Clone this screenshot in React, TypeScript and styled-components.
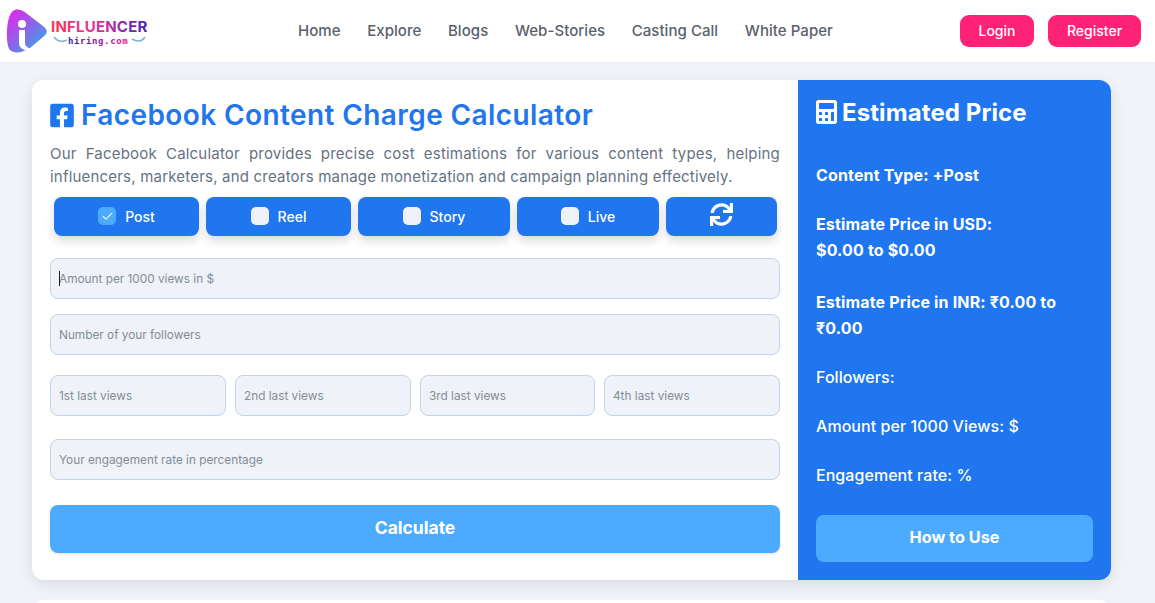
import styled, { createGlobalStyle } from 'styled-components'
import { FaCalculator, FaFacebookSquare, FaSync } from 'react-icons/fa'
import { Check } from 'lucide-react'

// Global Styles

const GlobalStyle = createGlobalStyle`
  html, body {
    margin: 0;
    height: 603px;
    overflow: hidden;
    background: #f0f3f7;
    font-family: Inter, "Liberation Sans", sans-serif;
  }
  * {
    box-sizing: border-box;
  }
`

// Header Styles

const Header = styled.header`
  height: 62px;
  background: #fff;
  display: flex;
  align-items: center;
  box-shadow: 0 1px 4px rgba(0, 0, 0, 0.04);
`

const LogoWrapper = styled.div`
  width: 290px;
  padding-left: 5px;
  display: flex;
  align-items: center;
`

const Nav = styled.nav`
  display: flex;
  gap: 26.6px;
  flex: 1;
  margin: -1px 0 0 8px;
`

const NavLink = styled.a`
  color: #5a616b;
  font-size: 15px;
  font-weight: 500;
  letter-spacing: 0.05px;
`

const AuthGroup = styled.div`
  display: flex;
  gap: 14px;
  padding-right: 14px;
`

const AuthButton = styled.button<{ wide?: boolean }>`
  width: ${props => (props.wide ? '93px' : '74px')};
  height: 32px;
  padding: 0 0 2px;
  border: none;
  border-radius: 9px;
  background: #ff2277;
  color: #fff;
  font: 500 14px Inter, sans-serif;
`

// Calculator Styles

const Card = styled.main`
  display: grid;
  grid-template-columns: 766px 313px;
  width: 1079px;
  height: 500px;
  margin: 18px 0 0 32px;
  border-radius: 12px;
  background: #fff;
  box-shadow: 0 4px 14px rgba(0, 0, 0, 0.1);
`

const FormPanel = styled.section`
  padding: 19px 18px 0;
`

const Title = styled.h1`
  display: flex;
  align-items: center;
  gap: 7px;
  margin: 0;
  height: 32px;
  color: #1f76ee;
  font-size: 28px;
  font-weight: 600;
  letter-spacing: 0.4px;
  white-space: nowrap;
  svg {
    width: 24px;
    height: 27px;
  }
`

const Intro = styled.p`
  margin: 11px 0 0;
  color: #66727f;
  font-size: 15px;
  line-height: 23px;
  letter-spacing: 0.2px;
  text-align: justify;
`

const TypeRow = styled.div`
  display: grid;
  grid-template-columns: 145px 145px 152px 142px 111px;
  gap: 7px;
  margin: 9px 4px 0;
`

const TypeButton = styled.label`
  display: flex;
  align-items: center;
  justify-content: center;
  gap: 9px;
  height: 39px;
  padding-bottom: 1px;
  border-radius: 8px;
  background: #1f76ee;
  color: #fff;
  font-size: 14px;
  font-weight: 500;
  box-shadow: 0 5px 10px rgba(0, 0, 0, 0.14);
`

const RefreshIcon = styled(FaSync)`
  width: 23px;
  height: 23px;
  margin-bottom: 4px;
`

const CheckBox = styled.span<{ checked?: boolean }>`
  display: flex;
  align-items: center;
  justify-content: center;
  width: 18px;
  height: 18px;
  border-radius: 5px;
  background: ${props => (props.checked ? '#4dabff' : '#eef1f8')};
  color: #e6f3ff;
`

const FieldGroup = styled.div`
  display: flex;
  flex-direction: column;
  margin-top: 22px;
`

const Field = styled.input`
  width: 100%;
  height: 41px;
  padding: 0 8px;
  border: 1px solid #c5d3e8;
  border-radius: 8px;
  outline: none;
  background: #eff2f8;
  font: 400 11.8px Inter, sans-serif;
  &::placeholder {
    color: #838d98;
  }
`

const FocusedWrapper = styled.div`
  position: relative;
  &::after {
    content: '';
    position: absolute;
    left: 9px;
    top: 13px;
    width: 1px;
    height: 15px;
    background: #222;
  }
`

const SecondField = styled(Field)`
  margin-top: 15px;
`

const ViewsRow = styled.div`
  display: grid;
  grid-template-columns: 176px 176px 175px 176px;
  gap: 9px;
  margin-top: 20px;
`

const EngagementField = styled(Field)`
  margin-top: 23px;
`

const CalculateButton = styled.button`
  width: 100%;
  height: 48px;
  margin-top: 25px;
  padding: 0 0 4px;
  border: none;
  border-radius: 8px;
  background: #4dabff;
  color: #fff;
  font: 700 17.5px Inter, sans-serif;
  box-shadow: 0 1px 3px rgba(0, 0, 0, 0.12);
`

// Result Styles

const ResultPanel = styled.aside`
  padding: 15px 18px 0;
  border-radius: 0 12px 12px 0;
  background: #1f76ee;
  color: #fff;
`

const ResultTitle = styled.h2`
  display: flex;
  align-items: center;
  gap: 5px;
  height: 34px;
  margin: 0 0 33px;
  font-size: 24px;
  font-weight: 700;
  letter-spacing: 0.1px;
  white-space: nowrap;
  svg {
    width: 21px;
    height: 24px;
  }
`

const ResultLine = styled.p<{ strong?: boolean; gap: number }>`
  margin: 0 0 ${props => props.gap}px;
  font-size: 16px;
  font-weight: ${props => (props.strong ? 700 : 500)};
  line-height: 26px;
  letter-spacing: ${props => (props.strong ? '0.15px' : '0.05px')};
`

const HowToButton = styled.button`
  width: 100%;
  height: 47px;
  margin-top: 27px;
  padding: 0 0 4px;
  border: none;
  border-radius: 8px;
  background: #4dabff;
  color: #fff;
  font: 700 16.3px Inter, sans-serif;
`

const NextCard = styled.div`
  width: 1079px;
  height: 100px;
  margin: 20px 0 0 32px;
  border-radius: 12px;
  background: #fff;
`

// Logo

const Logo = () => (
  <svg width="150" height="60" viewBox="0 0 150 60">
    <defs>
      <linearGradient id="mark" x1="0" y1="0" x2="1" y2="1">
        <stop offset="0" stopColor="#f01df0" />
        <stop offset="0.55" stopColor="#7d6fe8" />
        <stop offset="1" stopColor="#22b8ec" />
      </linearGradient>
      <linearGradient id="word" x1="0" y1="0" x2="1" y2="0">
        <stop offset="0" stopColor="#ff3355" />
        <stop offset="0.45" stopColor="#e0359a" />
        <stop offset="1" stopColor="#4a22b0" />
      </linearGradient>
      <linearGradient id="sub" x1="0" y1="0" x2="1" y2="0">
        <stop offset="0" stopColor="#3a1bb0" />
        <stop offset="1" stopColor="#e01b9a" />
      </linearGradient>
    </defs>
    <path
      d="M8 10 C12 7 17 9 21 12 L38 25 C43 29 43 32 38 36 L25 47 C17 52 9 53 5 49 C0 43 1 15 8 10 Z"
      fill="url(#mark)"
    />
    <circle cx="17" cy="23" r="4" fill="#fff" />
    <path d="M14 29 H20 V42 C20 46 25 48 31 50 C23 51 14 49 14 42 Z" fill="#fff" />
    <text x="46" y="31" fontFamily="Inter, sans-serif" fontSize="15" fontWeight="700" fill="url(#word)" letterSpacing="0.2">
      INFLUENCER
    </text>
    <text x="63" y="43" fontFamily="'DejaVu Sans Mono', monospace" fontSize="9" fontWeight="700" fill="url(#sub)" letterSpacing="0.6">
      hiring.com
    </text>
    <path d="M49 36 C53 41 58 41 62 39" stroke="#7fb2d8" strokeWidth="1.5" fill="none" />
    <path d="M140 36 C137 41 132 41 127 38" stroke="#7fb2d8" strokeWidth="1.5" fill="none" />
  </svg>
)

// Component

const contentTypes = [
  { label: 'Post', checked: true },
  { label: 'Reel', checked: false },
  { label: 'Story', checked: false },
  { label: 'Live', checked: false },
]

const navLinks = ['Home', 'Explore', 'Blogs', 'Web-Stories', 'Casting Call', 'White Paper']
const viewFields = ['1st last views', '2nd last views', '3rd last views', '4th last views']

export default function App() {
  return (
    <>
      <GlobalStyle />
      <Header>
        <LogoWrapper>
          <Logo />
        </LogoWrapper>
        <Nav>
          {navLinks.map(link => (
            <NavLink key={link}>{link}</NavLink>
          ))}
        </Nav>
        <AuthGroup>
          <AuthButton>Login</AuthButton>
          <AuthButton wide>Register</AuthButton>
        </AuthGroup>
      </Header>
      <Card>
        <FormPanel>
          <Title>
            <FaFacebookSquare />
            Facebook Content Charge Calculator
          </Title>
          <Intro>
            Our Facebook Calculator provides precise cost estimations for various content types, helping
            influencers, marketers, and creators manage monetization and campaign planning effectively.
          </Intro>
          <TypeRow>
            {contentTypes.map(type => (
              <TypeButton key={type.label}>
                <CheckBox checked={type.checked}>{type.checked && <Check size={13} strokeWidth={2} />}</CheckBox>
                {type.label}
              </TypeButton>
            ))}
            <TypeButton>
              <RefreshIcon />
            </TypeButton>
          </TypeRow>
          <FieldGroup>
            <FocusedWrapper>
              <Field placeholder="Amount per 1000 views in $" />
            </FocusedWrapper>
            <SecondField placeholder="Number of your followers" />
            <ViewsRow>
              {viewFields.map(field => (
                <Field key={field} placeholder={field} />
              ))}
            </ViewsRow>
            <EngagementField placeholder="Your engagement rate in percentage" />
          </FieldGroup>
          <CalculateButton>Calculate</CalculateButton>
        </FormPanel>
        <ResultPanel>
          <ResultTitle>
            <FaCalculator />
            Estimated Price
          </ResultTitle>
          <ResultLine strong gap={23}>
            Content Type: +Post
          </ResultLine>
          <ResultLine strong gap={26}>
            Estimate Price in USD:
            <br />
            $0.00 to $0.00
          </ResultLine>
          <ResultLine strong gap={23}>
            Estimate Price in INR: ₹0.00 to ₹0.00
          </ResultLine>
          <ResultLine gap={23}>Followers:</ResultLine>
          <ResultLine gap={23}>Amount per 1000 Views: $</ResultLine>
          <ResultLine gap={0}>Engagement rate: %</ResultLine>
          <HowToButton>How to Use</HowToButton>
        </ResultPanel>
      </Card>
      <NextCard />
    </>
  )
}
